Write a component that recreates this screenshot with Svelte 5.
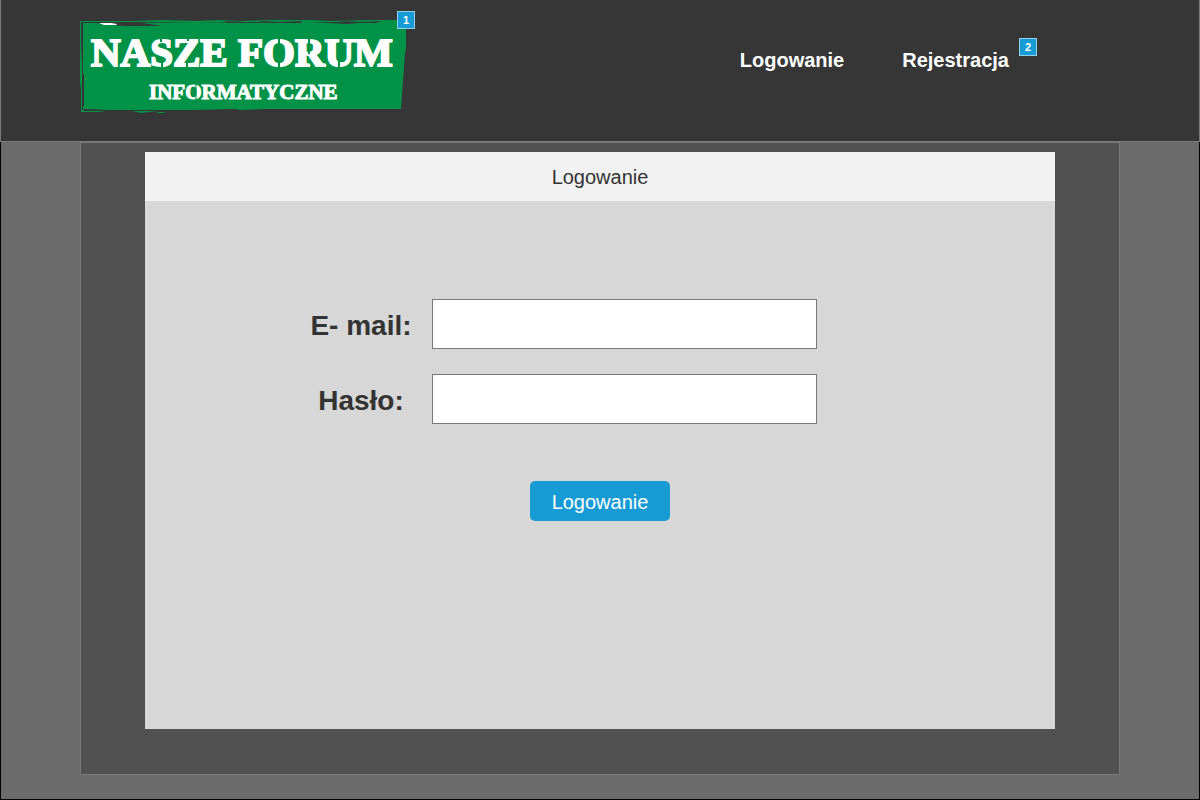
<script>
  let email = $state('');
  let password = $state('');
</script>

<div class="page">
  <header class="topbar">
    <a class="brand" href="#home" aria-label="Nasze Forum Informatyczne">
      <svg class="logo" viewBox="0 0 328 94" width="328" height="94">
        <g fill="#009347">
          <path d="M3 3 L15 3 L43 6 L82 6 L62 3 L116 2 L180 3 L230 2 L268 4 L287 2 L326 1 L326 28 L325 33 L323 61 L321 89 L188 89 L160 90 L155 89 L112 90 L73 90 L28 90 L3 89 Z" />
          <path d="M0 1 L50 1 L50 2 L1 2 L1 19 L2 45 L2 90 L19 91 L26 92 L1 92 L1 70 L0 62 Z" />
          <path d="M50 1 L84 0 L115 1 L139 0 L160 1 L195 0 L230 0 L250 1 L290 0 L324 0 L324 2 L50 2 Z" />
          <path d="M52 91 L79 91 L69 92 L61 93 Z M75 92 L85 92 L84 93 L79 93 Z" />
        </g>
        <path d="M19 3 L31 3 L37 4 L36 5 L24 5 Z" fill="#fff" />
        <g fill="#363636">
          <path d="M42 2 L55 2 L72 5 L64 6 L52 4 Z M143 1 L166 2 L168 3 L150 3 Z M178 1 L200 2 L222 1 L220 3 L190 3 Z M258 1 L284 2 L302 1 L296 3 L270 3 Z" />
          <path d="M1 4 L3 4 L3 30 L2 40 Z M3 54 L4 54 L4 86 L2 86 Z M4 89 L26 90 L4 91 Z" />
        </g>
        <g class="title">
          <text x="11" y="46" font-size="41" stroke-width="2">NASZE FORUM</text>
          <text x="69" y="79" font-size="21" stroke-width="1">INFORMATYCZNE</text>
        </g>
        <g stroke="#009347" stroke-width="2">
          <path d="M199 16 V50 M259 38 V50 M81 15 V22 M82 41 V49 M229 16 V34 M108 16 V21 M107 42 V48" />
          <path d="M116 63 V81" stroke-width="1" />
        </g>
      </svg>
      <span class="note">1</span>
    </a>
    <nav class="nav">
      <a href="#login">Logowanie</a>
      <a href="#register">Rejestracja<span class="note">2</span></a>
    </nav>
  </header>

  <div class="canvas">
    <main class="content">
      <section class="panel">
        <h1>Logowanie</h1>
        <form onsubmit={(event) => event.preventDefault()}>
          <div class="fields">
            <label for="email">E- mail:</label>
            <input id="email" type="email" bind:value={email} />
            <label for="password">Hasło:</label>
            <input id="password" type="password" bind:value={password} />
          </div>
          <button type="submit">Logowanie</button>
        </form>
      </section>
    </main>
  </div>
</div>

<style>
  * {
    box-sizing: border-box;
  }

  .page {
    display: flex;
    flex-direction: column;
    min-height: 100vh;
    color: #333;
    font-family: 'Liberation Sans', Arial, sans-serif;
    font-size: 20px;
    line-height: 24px;
  }

  .topbar {
    display: flex;
    align-items: center;
    justify-content: space-between;
    min-height: 142px;
    padding: 0 190px 22px 79px;
    border: 1px solid #797979;
    border-top: 0;
    background: #363636;
  }

  .brand {
    position: relative;
    padding-top: 14px;
    text-decoration: none;
  }

  .logo {
    display: block;
    overflow: visible;
  }

  .title {
    fill: #fff;
    stroke: #fff;
    font-family: 'Liberation Serif', 'Times New Roman', serif;
    font-weight: bold;
  }

  .nav {
    display: flex;
    gap: 58px;
  }

  .nav a {
    position: relative;
    color: #fff;
    font-weight: bold;
    text-decoration: none;
  }

  .note {
    position: absolute;
    top: -10px;
    right: -28px;
    width: 18px;
    height: 18px;
    border: 1px solid #8fd0ee;
    background: #169bd5;
    color: #fff;
    font-size: 11px;
    font-weight: bold;
    line-height: 16px;
    text-align: center;
  }

  .brand .note {
    top: 5px;
    right: -7px;
  }

  .canvas {
    display: flex;
    flex: 1;
    padding: 0 79px 24px;
    border: 1px solid #000;
    border-top: 0;
    background: #6b6b6b;
  }

  .content {
    display: flex;
    flex: 1;
    padding: 9px 64px 45px;
    border: 1px solid #797979;
    background: #515151;
  }

  .panel {
    flex: 1;
    background: #d7d7d7;
  }

  h1 {
    margin: 0;
    padding: 13px 0 12px;
    background: #f2f2f2;
    font-size: 20px;
    font-weight: normal;
    text-align: center;
  }

  form {
    display: flex;
    flex-direction: column;
    align-items: center;
    gap: 57px;
    padding-top: 98px;
  }

  .fields {
    display: grid;
    grid-template-columns: 104px 385px;
    align-items: center;
    gap: 25px 19px;
    margin-right: 74px;
  }

  label {
    padding-top: 4px;
    font-size: 28px;
    font-weight: bold;
    line-height: 32px;
    text-align: center;
    white-space: nowrap;
  }

  input {
    width: 100%;
    height: 50px;
    padding: 0 12px;
    border: 1px solid #797979;
    border-radius: 0;
    background: #fff;
    color: #333;
    font: inherit;
  }

  button {
    width: 140px;
    height: 40px;
    padding: 2px 0 0;
    border: 0;
    border-radius: 5px;
    background: #169bd5;
    color: #fff;
    font: inherit;
  }
</style>
